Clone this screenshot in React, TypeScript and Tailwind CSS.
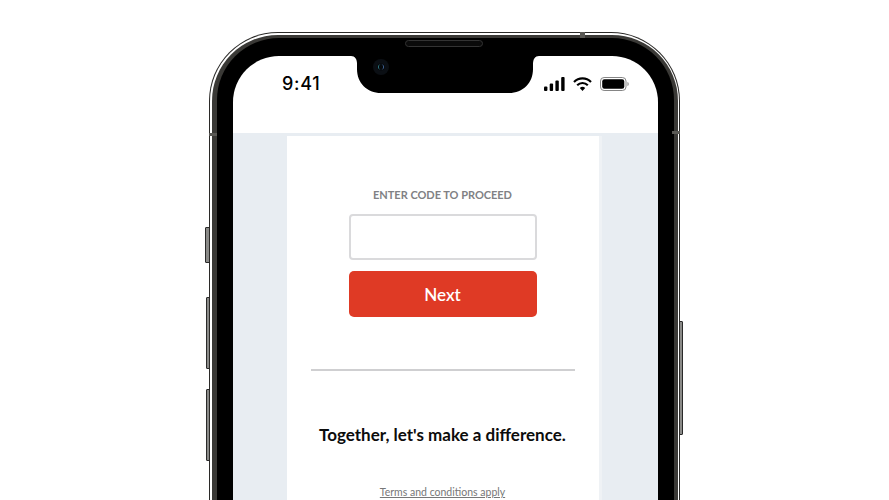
import React from 'react';

const SideButton = ({ className }: { className: string }) => (
  <div className={`absolute bg-[#8a8a88] border border-[#2a2a2a] rounded-[1px] ${className}`} />
);

const StatusIcons = () => (
  <div className="flex items-center gap-[8px]">
    <svg width="21" height="14" viewBox="0 0 21 14" fill="#000">
      <rect x="0" y="9.5" width="3.4" height="4.5" rx="1" />
      <rect x="5.7" y="6.5" width="3.4" height="7.5" rx="1" />
      <rect x="11.4" y="3.5" width="3.4" height="10.5" rx="1" />
      <rect x="17.2" y="0" width="3.4" height="14" rx="1" />
    </svg>
    <svg width="19" height="14" viewBox="0 0 19 14" fill="none" stroke="#000" strokeWidth="2.2">
      <path d="M1 5 A12 12 0 0 1 18 5" />
      <path d="M4.2 8.2 A7.5 7.5 0 0 1 14.8 8.2" />
      <path d="M9.5 14 L6.8 11 A3.8 3.8 0 0 1 12.2 11 Z" fill="#000" stroke="none" />
    </svg>
    <svg width="29" height="14" viewBox="0 0 29 14" fill="none">
      <rect x="0.5" y="0.5" width="25.5" height="13" rx="3.6" stroke="#777" strokeWidth="0.9" />
      <rect x="2.2" y="2.2" width="22.1" height="9.6" rx="2.2" fill="#000" />
      <path d="M27.4 5 C28.4 5.4 28.8 6.2 28.8 7 C28.8 7.8 28.4 8.6 27.4 9 Z" fill="#999" />
    </svg>
  </div>
);

const Notch = () => (
  <div className="absolute left-[118px] top-0 w-[188px] h-[37px]">
    <svg width="188" height="37" viewBox="0 0 188 37" fill="#000" className="block">
      <path d="M0 0 H188 C184 0 182 3 182 8 V13 C182 27 172 37 158 37 H30 C16 37 6 27 6 13 V8 C6 3 4 0 0 0 Z" />
      <circle cx="30" cy="11" r="8" fill="#0b0f14" />
      <circle cx="30" cy="11" r="3.6" fill="#06090c" />
      <path d="M28.6 8.6 A3 3 0 0 0 28.6 13.4" stroke="#2c6f78" strokeWidth="1" fill="none" />
      <path d="M31.4 8.6 A3 3 0 0 1 31.4 13.4" stroke="#3d5f8f" strokeWidth="1" fill="none" />
    </svg>
  </div>
);

export default function App() {
  return (
    <div className="h-[500px] overflow-hidden bg-white pl-[209px] pt-[32px] font-['Lato',sans-serif]">
      <div className="relative w-[471px]">
        {/* hardware buttons */}
        <SideButton className="-left-[4px] top-[195px] w-[5px] h-[36px]" />
        <SideButton className="-left-[3px] top-[265px] w-[4px] h-[72px]" />
        <SideButton className="-left-[3px] top-[357px] w-[4px] h-[72px]" />
        <SideButton className="left-[470px] top-[289px] w-[4px] h-[114px]" />

        {/* frame layers */}
        <div className="relative h-[468px] rounded-t-[69px] bg-[#2b2a28] pl-[1px] pr-[1px] pt-[1px]">
          <div className="h-full rounded-t-[68px] bg-white pl-[1.5px] pr-[1.5px] pt-[1.5px]">
            <div className="h-full rounded-t-[66px] bg-[#3a3936] pl-[5px] pr-[3.5px] pt-[3.5px]">
              <div className="h-full rounded-t-[62px] bg-black pl-[16.5px] pr-[16px] pt-[18px]">
                {/* screen */}
                <div className="relative h-full overflow-hidden rounded-t-[46px] bg-white">
                  <Notch />
                  <div className="flex h-[77px] items-start justify-between pl-[49px] pr-[29.5px] pt-[18px]">
                    <div className="text-[18px] leading-[20px] font-medium tracking-[0.7px] text-black font-['Inter',sans-serif]">9:41</div>
                    <div className="pt-[3px]">
                      <StatusIcons />
                    </div>
                  </div>

                  <div className="h-[400px] bg-[#e8edf2] pl-[54px] pt-[3px]">
                    <div className="flex h-full w-[315px] flex-col items-center border-r-[3px] border-[#eff2f5] bg-white pr-[1px]">
                      <div className="mt-[52px] text-[11px] leading-[13px] font-bold text-[#808184] tracking-[-0.02px]">ENTER CODE TO PROCEED</div>
                      <input
                        className="mt-[13px] h-[46px] w-[188px] rounded-[4px] border-2 border-[#dadadc] bg-white outline-none"
                        aria-label="Code"
                      />
                      <button className="mt-[11px] h-[46px] w-[188px] rounded-[5px] bg-[#df3a25] pt-[2px] text-[17px] font-semibold text-white">Next</button>
                      <div className="mt-[52px] h-[1.5px] w-[264px] bg-[#cfcfd1]" />
                      <h2 className="mt-[54px] text-[17px] leading-[20px] font-bold text-[#0c0c0c]">Together, let's make a difference.</h2>
                      <a className="mt-[40px] text-[10.5px] leading-[14px] text-[#777] underline">Terms and conditions apply</a>
                    </div>
                  </div>
                </div>
              </div>
            </div>
          </div>

          {/* speaker and antenna bands sit over the frame */}
          <div className="absolute left-[196px] top-[8px] h-[7px] w-[78px] rounded-full border border-[#333] bg-[#0a0a0a]" />
          <div className="absolute left-[371px] top-0 h-[6px] w-[5px] bg-[#5a5955]" />
          <div className="absolute left-0 top-[101px] h-[3px] w-[8px] bg-[#5a5955]" />
          <div className="absolute right-0 top-[99px] h-[3px] w-[8px] bg-[#5a5955]" />
        </div>
      </div>
    </div>
  );
}
